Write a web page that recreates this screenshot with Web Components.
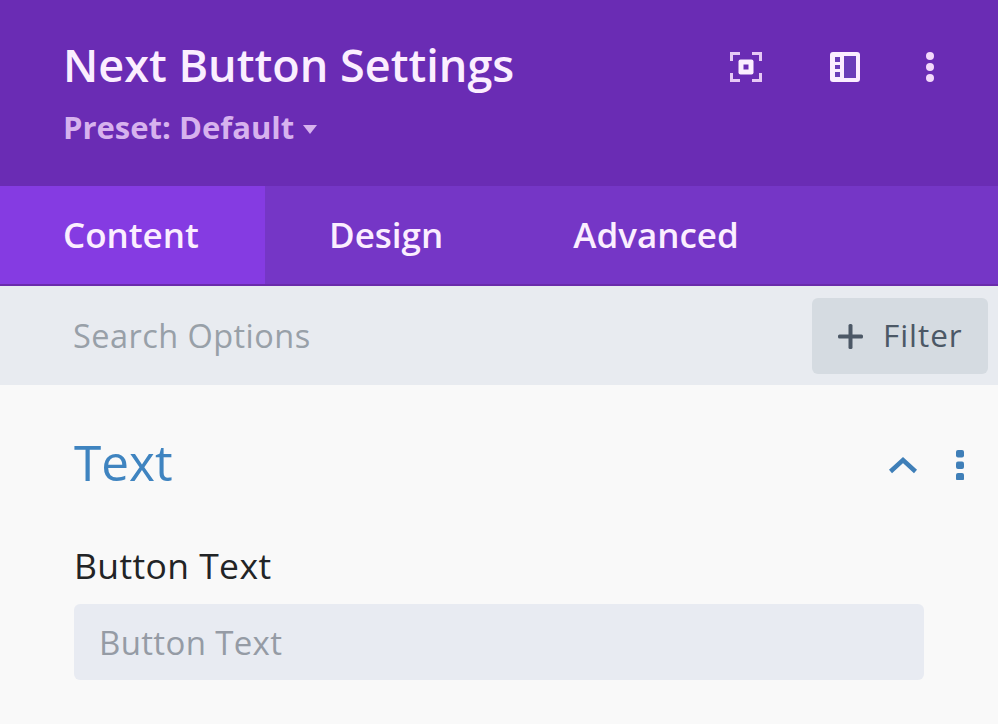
<!DOCTYPE html>
<html>
<head>
<meta charset="utf-8">
<style>
  html, body { margin: 0; padding: 0; background: #fff; }
  body { width: 998px; height: 728px; overflow: hidden; font-family: "Open Sans", sans-serif; }
</style>
</head>
<body>
<settings-panel>
  <panel-header title="Next Button Settings" preset="Preset: Default"></panel-header>
  <panel-tabs></panel-tabs>
  <search-bar></search-bar>
  <option-group heading="Text">
    <text-field label="Button Text" placeholder="Button Text"></text-field>
  </option-group>
</settings-panel>
<script>
'use strict';
class SettingsPanel extends HTMLElement {
  constructor() {
    super();
    this.attachShadow({mode: 'open'});
    this.shadowRoot.innerHTML = `
      <style>
        :host {
          display: flex;
          flex-direction: column;
          width: 998px;
          height: 724px;
          background: #f9f9f9;
          font-family: "Open Sans", sans-serif;
        }
      </style>
      <slot></slot>
    `;
  }
}
customElements.define('settings-panel', SettingsPanel);

class PanelHeader extends HTMLElement {
  constructor() {
    super();
    this.attachShadow({mode: 'open'});
    this.shadowRoot.innerHTML = `
      <style>
        :host {
          display: flex;
          justify-content: space-between;
          height: 186px;
          box-sizing: border-box;
          padding: 35px 62px 0 63px;
          background: #6a2cb4;
        }
        h1 {
          margin: 0;
          font-size: 45px;
          line-height: 60px;
          font-weight: 600;
          color: #fbeeff;
        }
        .preset {
          display: flex;
          align-items: center;
          gap: 9px;
          margin-top: 10px;
          font-size: 31px;
          line-height: 44px;
          font-weight: 700;
          color: #d7b2ee;
        }
        .caret {
          width: 0;
          height: 0;
          margin-top: 4px;
          border-left: 7px solid transparent;
          border-right: 7px solid transparent;
          border-top: 9px solid #d7b2ee;
        }
        .icons {
          display: flex;
          align-items: center;
          gap: 64px;
          height: 64px;
        }
        svg { display: block; }
        .focus { margin-right: 3px; }
        .kebab { margin-left: -1px; }
      </style>
      <div>
        <h1></h1>
        <div class="preset"><span></span><i class="caret"></i></div>
      </div>
      <div class="icons">
        <svg class="focus" width="32" height="32" viewBox="0 0 32 32" fill="none">
          <path d="M1.5 10V2.5H10M22 2.5H30.5V10M1.5 22V29.5H10M22 29.5H30.5V22" stroke="#e6c8f5" stroke-width="3"/>
          <rect x="8.5" y="8.5" width="15" height="15" rx="2" fill="#fbeeff"/>
          <rect x="13.5" y="13.5" width="5" height="5" fill="#6a2cb4"/>
        </svg>
        <svg width="32" height="32" viewBox="0 0 32 32">
          <rect x="1" y="1" width="30" height="30" rx="3" fill="#fbeeff"/>
          <rect x="15" y="5" width="12" height="22" fill="#6a3db8"/>
          <rect x="6" y="6" width="5" height="5" fill="#6a3db8"/>
          <rect x="6" y="14" width="5" height="4" fill="#6a3db8"/>
          <rect x="6" y="21" width="5" height="5" fill="#6a3db8"/>
        </svg>
        <svg class="kebab" width="12" height="32" viewBox="0 0 12 32" fill="#f3d9fb">
          <circle cx="6" cy="5" r="4"/>
          <circle cx="6" cy="16" r="4"/>
          <circle cx="6" cy="27" r="4"/>
        </svg>
      </div>
    `;
    this.shadowRoot.querySelector('h1').textContent = this.getAttribute('title');
    this.shadowRoot.querySelector('.preset span').textContent = this.getAttribute('preset');
    this.removeAttribute('title');
  }
}
customElements.define('panel-header', PanelHeader);

class PanelTabs extends HTMLElement {
  constructor() {
    super();
    this.attachShadow({mode: 'open'});
    this.shadowRoot.innerHTML = `
      <style>
        :host {
          display: flex;
          height: 100px;
          box-sizing: border-box;
          background: #7536c6;
          border-bottom: 2px solid #6a2cab;
          font-size: 35px;
          font-weight: 600;
          color: #fbeeff;
        }
        div {
          display: flex;
          align-items: center;
          padding: 0 65px;
          padding-bottom: 2px;
        }
        .active {
          width: 265px;
          box-sizing: border-box;
          padding-left: 63px;
          padding-right: 0;
          background: #853be2;
        }
        .design { padding-left: 64px; padding-right: 66px; }
        .advanced { padding-left: 64px; }
      </style>
      <div class="active">Content</div>
      <div class="design">Design</div>
      <div class="advanced">Advanced</div>
    `;
  }
}
customElements.define('panel-tabs', PanelTabs);

class SearchBar extends HTMLElement {
  constructor() {
    super();
    this.attachShadow({mode: 'open'});
    this.shadowRoot.innerHTML = `
      <style>
        :host {
          display: flex;
          align-items: center;
          justify-content: space-between;
          height: 99px;
          box-sizing: border-box;
          padding: 0 10px 0 73px;
          background: #e8ebf0;
          font-size: 32.5px;
        }
        .hint { color: #98a0a8; letter-spacing: .45px; }
        button {
          display: flex;
          align-items: center;
          gap: 20px;
          width: 176px;
          height: 76px;
          box-sizing: border-box;
          margin-top: 1px;
          padding: 0 0 3px 26px;
          border: 0;
          border-radius: 6px;
          background: #d5dbe1;
          color: #4c5866;
          font: inherit;
          font-size: 31.5px;
          letter-spacing: .95px;
        }
        svg { display: block; flex: none; margin-top: 3px; }
      </style>
      <span class="hint">Search Options</span>
      <button>
        <svg width="25" height="25" viewBox="0 0 25 25" fill="#4c5866">
          <rect x="0" y="10.5" width="25" height="4" rx="1.5"/>
          <rect x="10.5" y="0" width="4" height="25" rx="1.5"/>
        </svg>
        Filter
      </button>
    `;
  }
}
customElements.define('search-bar', SearchBar);

class OptionGroup extends HTMLElement {
  constructor() {
    super();
    this.attachShadow({mode: 'open'});
    this.shadowRoot.innerHTML = `
      <style>
        :host {
          display: block;
          padding: 43px 34px 0 74px;
        }
        .head {
          display: flex;
          align-items: center;
          justify-content: space-between;
          height: 68px;
        }
        h2 {
          margin: 0;
          font-size: 49.5px;
          font-weight: 400;
          line-height: 68px;
          color: #3f84c0;
        }
        .tools {
          display: flex;
          align-items: center;
          gap: 37px;
          margin-top: 6px;
        }
        svg { display: block; }
      </style>
      <div class="head">
        <h2></h2>
        <div class="tools">
          <svg width="30" height="18" viewBox="0 0 30 18" fill="none">
            <path d="M2.5 15.5L15 4L27.5 15.5" stroke="#3f7fb8" stroke-width="4.5"/>
          </svg>
          <svg width="9" height="30" viewBox="0 0 9 30" fill="#3f7fb8">
            <rect x="1" y="0" width="8" height="7.5" rx="2"/>
            <rect x="1" y="11.5" width="8" height="7.5" rx="2"/>
            <rect x="1" y="23" width="8" height="7.5" rx="2"/>
          </svg>
        </div>
      </div>
      <slot></slot>
    `;
    this.shadowRoot.querySelector('h2').textContent = this.getAttribute('heading');
  }
}
customElements.define('option-group', OptionGroup);

class TextField extends HTMLElement {
  constructor() {
    super();
    this.attachShadow({mode: 'open'});
    this.shadowRoot.innerHTML = `
      <style>
        :host {
          display: block;
          margin-top: 47px;
        }
        label {
          display: block;
          font-size: 35.5px;
          line-height: 44px;
          letter-spacing: .4px;
          color: #222426;
        }
        .input {
          display: flex;
          align-items: center;
          width: 850px;
          height: 76px;
          box-sizing: border-box;
          margin-top: 17px;
          padding-left: 25px;
          border-radius: 6px;
          background: #e8ebf2;
          font-size: 33px;
          letter-spacing: .35px;
          color: #959ba5;
        }
      </style>
      <label></label>
      <div class="input"></div>
    `;
    this.shadowRoot.querySelector('label').textContent = this.getAttribute('label');
    this.shadowRoot.querySelector('.input').textContent = this.getAttribute('placeholder');
  }
}
customElements.define('text-field', TextField);
</script>
</body>
</html>
